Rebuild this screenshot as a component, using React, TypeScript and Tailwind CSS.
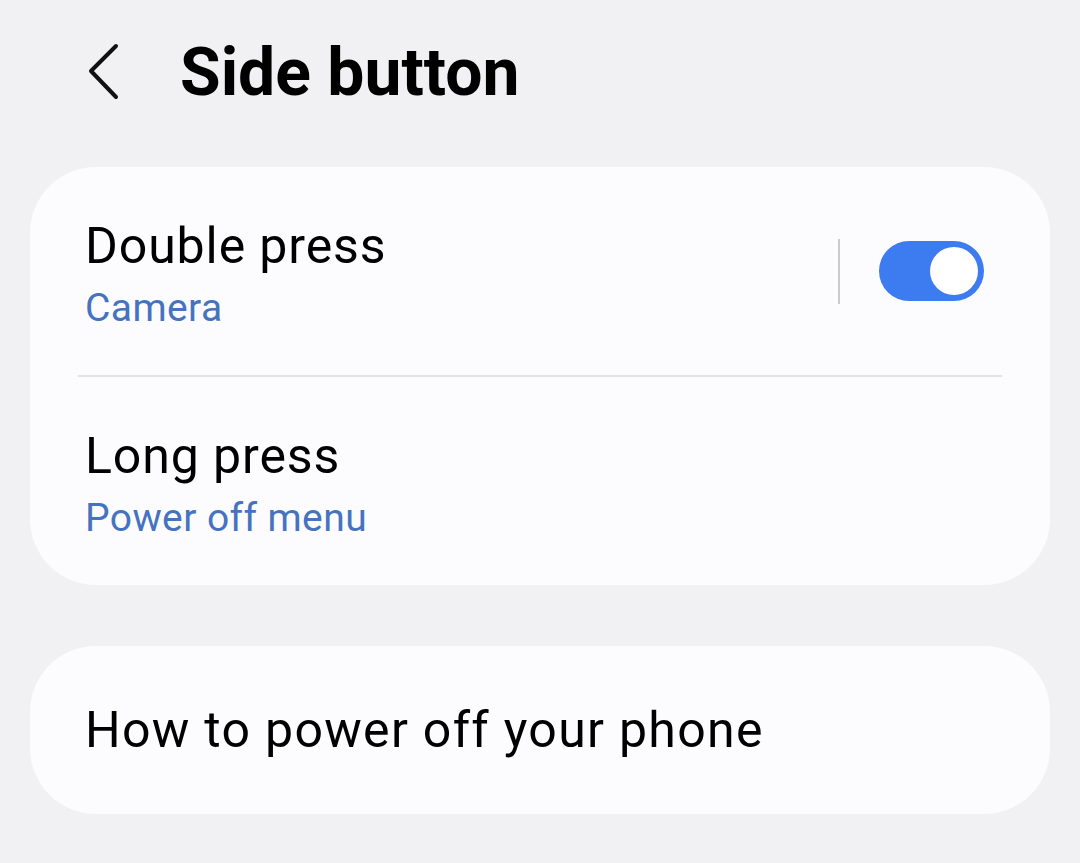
import React from "react";

const FONT = { fontFamily: "Roboto, 'Noto Sans', sans-serif" };

function Chevron() {
  return (
    <svg width="36" height="60" viewBox="0 0 36 60" fill="none" className="shrink-0">
      <path d="M30 3 L5 28 L30 54" stroke="#111" strokeWidth="4" strokeLinecap="round" strokeLinejoin="round" />
    </svg>
  );
}

function Toggle() {
  return (
    <div className="flex h-[60px] w-[105px] items-center justify-end rounded-full bg-[#3c7cf0] pr-[6px]">
      <div className="h-[48px] w-[48px] rounded-full bg-white" />
    </div>
  );
}

function Row({ title, sub, right }: { title: string; sub: string; right?: React.ReactNode }) {
  return (
    <div className="flex h-[208px] items-center justify-between pl-[55px] pr-[66px]">
      <div className="flex flex-col pt-[6px]">
        <span className="text-[50px] leading-[60px] tracking-[0.9px] text-black">{title}</span>
        <span className="mt-[8px] text-[39px] leading-[48px] tracking-[0.4px] text-[#4673bf]">{sub}</span>
      </div>
      {right}
    </div>
  );
}

export default function App() {
  return (
    <div className="h-[863px] w-[1080px] overflow-hidden bg-[#f1f1f3]" style={FONT}>
      <header className="flex h-[145px] items-center pl-[86px]">
        <Chevron />
        <h1 className="ml-[58px] text-[66px] font-bold leading-none text-black">Side button</h1>
      </header>

      <section className="mx-[30px] mt-[22px] rounded-[66px] bg-[#fcfcfe]">
        <Row
          title="Double press"
          sub="Camera"
          right={
            <div className="flex items-center">
              <div className="h-[65px] w-[2px] bg-[#cbcbcd]" />
              <div className="ml-[39px]">
                <Toggle />
              </div>
            </div>
          }
        />
        <div className="mx-[48px] h-[2px] bg-[#e3e3e5]" />
        <Row title="Long press" sub="Power off menu" />
      </section>

      <section className="mx-[30px] mt-[61px] flex h-[168px] items-center rounded-[66px] bg-[#fcfcfe] pl-[55px]">
        <span className="text-[50px] leading-[60px] tracking-[1.3px] text-black">How to power off your phone</span>
      </section>
    </div>
  );
}
